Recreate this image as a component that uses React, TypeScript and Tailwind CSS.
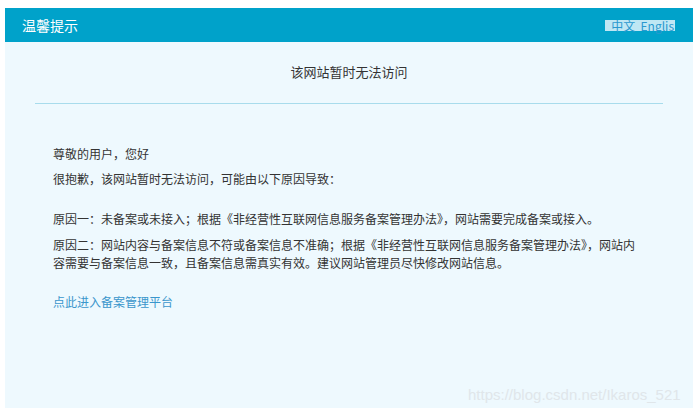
import React from 'react';

const font = { fontFamily: '"Noto Sans CJK SC", "Microsoft YaHei", sans-serif' };

export default function App() {
  return (
    <div className="relative h-[413px] w-[699px] bg-white pt-[8px] pl-[5px]" style={font}>
      <div className="flex h-[400px] w-[688px] flex-col bg-[#eef9fe]">
        {/* header */}
        <div className="flex h-[34px] items-center justify-between bg-[#00a2ca] pl-[17px] pr-[18px]">
          <span className="text-[14px] leading-none text-white">温馨提示</span>
          <span className="h-[11px] whitespace-nowrap bg-[#bfe7f4] pl-[6px] pr-[1px] text-[12px] leading-[11px] text-[#2a98cf]">
            中文&nbsp;&nbsp;Englis
          </span>
        </div>

        {/* title */}
        <div className="pt-[21px] text-center text-[13px] leading-[18px] text-[#333]">该网站暂时无法访问</div>
        <div className="mx-[30px] mt-[22px] h-px bg-[#a8dcec]" />

        {/* content */}
        <div className="w-[632px] pl-[48px] pt-[41px] text-[12px] leading-[18px] text-[#333]">
          <p>尊敬的用户，您好</p>
          <p className="mt-[7px]">很抱歉，该网站暂时无法访问，可能由以下原因导致：</p>
          <p className="mt-[22px]">原因一：未备案或未接入；根据《非经营性互联网信息服务备案管理办法》，网站需要完成备案或接入。</p>
          <p className="mt-[8px]">
            原因二：网站内容与备案信息不符或备案信息不准确；根据《非经营性互联网信息服务备案管理办法》，网站内容需要与备案信息一致，且备案信息需真实有效。建议网站管理员尽快修改网站信息。
          </p>
          <a href="#" className="mt-[21px] block text-[#3a96cc]">
            点此进入备案管理平台
          </a>
        </div>
      </div>

      {/* watermark */}
      <div
        className="absolute left-[468px] top-[386px] text-[15px] leading-[18px] text-[#e0e6ea]"
        style={{ fontFamily: '"Liberation Sans", Arial, sans-serif' }}
      >
        https://blog.csdn.net/Ikaros_521
      </div>
    </div>
  );
}
